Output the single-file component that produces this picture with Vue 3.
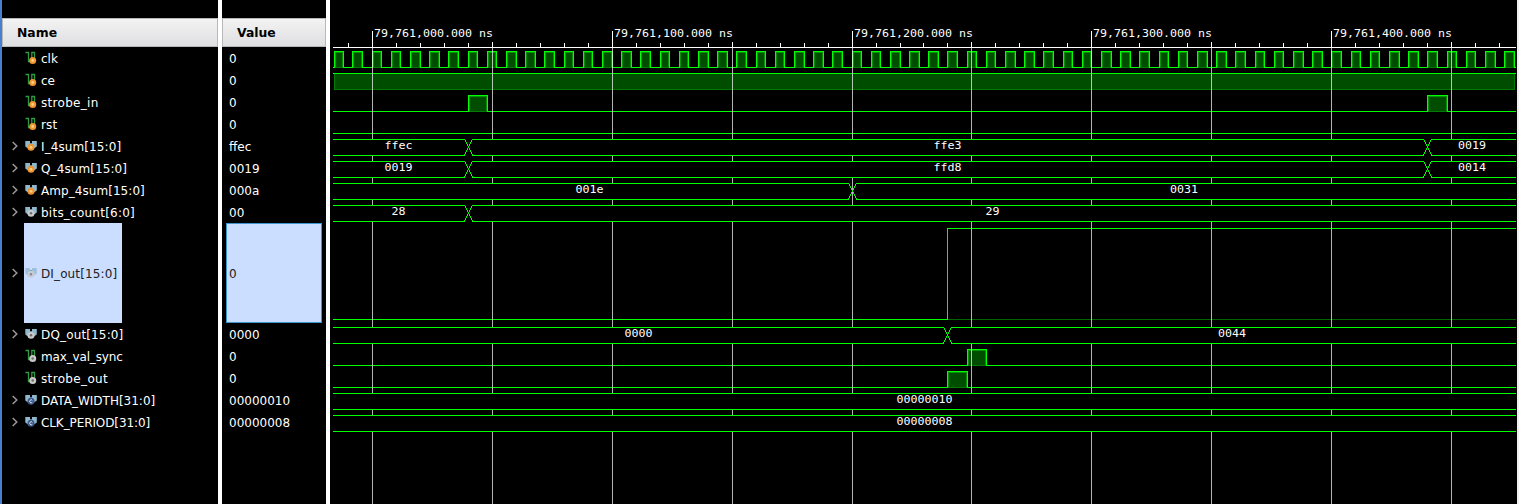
<script setup>
const X0 = 372.14
const PX = 19.195
const edge = (k) => Math.floor(X0 + PX * k)

const clock = []
for (let k = -2; k < 60; k++) clock.push([Math.max(334, edge(k)), edge(k + 0.5)])

const clockLine = 'M333 67.5' + clock.map(([a, b]) => `H${a + 0.5}V51.5H${b + 0.5}V67.5`).join('') + 'H1516'

const pulses = [
  ...clock.map(([a, b]) => ({ a, b, y: 51 })),
  { a: 468, b: 487, y: 95 },
  { a: 1427, b: 1447, y: 95 },
  { a: 967, b: 986, y: 349 },
  { a: 947, b: 967, y: 371 },
]

const bitLines = [
  clockLine,
  'M333 73.5H1516',
  'M333 111.5H468.5V95.5H487.5V111.5H1427.5V95.5H1447.5V111.5H1516',
  'M333 133.5H1516',
  'M333 319.5H947.5V228.5H1516',
  'M333 365.5H967.5V349.5H986.5V365.5H1516',
  'M333 387.5H947.5V371.5H967.5V387.5H1516',
]

const grid = Array.from({ length: 10 }, (_, k) => ({ x: edge(k * 6.25), major: k % 2 === 0 }))
const ticks = Array.from({ length: 50 }, (_, k) => edge((k - 1) * 1.25)).filter((x) => x < 1516)

const stamps = ['79,761,000.000 ns', '79,761,100.000 ns', '79,761,200.000 ns', '79,761,300.000 ns', '79,761,400.000 ns']
  .map((t, i) => ({ t, x: edge(i * 12.5) + 2 }))

const buses = [
  { y: 139, cross: [468, 1427], labels: [[385, 'ffec'], [934, 'ffe3'], [1458.5, '0019']] },
  { y: 161, cross: [468, 1427], labels: [[385, '0019'], [934, 'ffd8'], [1458.5, '0014']] },
  { y: 183, cross: [852], labels: [[576, '001e'], [1170.5, '0031']] },
  { y: 205, cross: [468], labels: [[392, '28'], [986, '29']] },
  { y: 327, cross: [947], labels: [[625, '0000'], [1218.5, '0044']] },
  { y: 393, cross: [], labels: [[897, '00000010']] },
  { y: 415, cross: [], labels: [[897, '00000008']] },
]

// Bus rails are interrupted where the value changes; the X is stepped one pixel per row.
function rails({ y, cross }) {
  let d = ''
  for (const r of [y, y + 16]) {
    let x = 333
    for (const c of cross) {
      d += `M${x} ${r}H${c - 4}v1H${x}z`
      x = c + 5
    }
    d += `M${x} ${r}H1516v1H${x}z`
  }
  for (const c of cross) {
    for (let i = 0; i <= 16; i++) {
      const s = Math.floor((i + 1) / 2)
      d += `M${c - 4 + s} ${y + i}h1v1h-1z`
      if (i !== 8) d += `M${c + 4 - s} ${y + i}h1v1h-1z`
    }
  }
  return d
}

const signals = [
  { name: 'clk', value: '0', dot: 'in', track: 0 },
  { name: 'ce', value: '0', dot: 'in', track: 0 },
  { name: 'strobe_in', value: '0', dot: 'in', track: 0.3 },
  { name: 'rst', value: '0', dot: 'in', track: 0.1 },
  { name: 'I_4sum[15:0]', value: 'ffec', dot: 'in', bus: true, track: 0.1 },
  { name: 'Q_4sum[15:0]', value: '0019', dot: 'in', bus: true, track: 0.1 },
  { name: 'Amp_4sum[15:0]', value: '000a', dot: 'in', bus: true, track: 0.06 },
  { name: 'bits_count[6:0]', value: '00', dot: 'out', bus: true, track: 0.24 },
  { name: 'DI_out[15:0]', value: '0', dot: 'out', bus: true, selected: true, track: 0.12 },
  { name: 'DQ_out[15:0]', value: '0000', dot: 'out', bus: true, track: 0.15 },
  { name: 'max_val_sync', value: '0', dot: 'out', track: -0.16 },
  { name: 'strobe_out', value: '0', dot: 'out', track: 0.35 },
  { name: 'DATA_WIDTH[31:0]', value: '00000010', dot: 'const', bus: true, track: 0 },
  { name: 'CLK_PERIOD[31:0]', value: '00000008', dot: 'const', bus: true, track: -0.1 },
]
</script>

<template>
  <div class="viewer">
    <section class="names">
      <header class="head">Name</header>
      <div v-for="s in signals" :key="s.name" class="row" :class="{ selected: s.selected }">
        <span class="twist">
          <svg v-if="s.bus" width="6" height="10" viewBox="0 0 6 10"><path d="M0.7 1L4.8 5L0.7 9" fill="none" stroke="#999" stroke-width="1.5" /></svg>
        </span>
        <span class="cell">
          <svg class="icon" width="13" height="14" viewBox="0 0 13 14">
            <template v-if="s.bus">
              <path d="M0.3 2H5V5L3 9.5L0.3 7.5ZM7 2H11.8V7.5L9 9.5L7 5Z" fill="#8fb8cd" />
              <path d="M5 4H7V6H5Z" fill="#5d8093" />
            </template>
            <path v-else d="M0.5 1.5H3.5V10.5H6M6.8 8V1.5H9.5V8" fill="none" stroke="#2f9a41" stroke-width="1.3" />
            <g :transform="s.bus ? 'translate(6 8.3)' : 'translate(7.7 9.5)'">
              <circle r="3.5" :class="s.dot" />
              <circle v-if="s.dot === 'in'" r="1.4" fill="#ffcf80" />
              <circle v-else-if="s.dot === 'out'" r="1.2" fill="#6c6c6c" />
              <path v-else d="M1.3 -1A1.5 1.5 0 1 0 1.3 1" fill="none" stroke="#e4ecf8" />
            </g>
          </svg>
          <span class="label" :style="{ letterSpacing: s.track + 'px' }">{{ s.name }}</span>
        </span>
      </div>
    </section>
    <section class="values">
      <header class="head">Value</header>
      <div v-for="s in signals" :key="s.name" class="row" :class="{ selected: s.selected }">
        <span class="cell"><span class="label">{{ s.value }}</span></span>
      </div>
    </section>
    <svg class="waves" width="1189" height="504" viewBox="330 0 1189 504">
      <g shape-rendering="crispEdges">
        <rect x="334.5" y="73.5" width="1180" height="16" class="fill" />
        <rect v-for="(p, i) in pulses" :key="i" :x="p.a + 1.5" :y="p.y + 1.5" :width="p.b - p.a - 2" height="15" class="fill pulse" />
        <path d="M947 319.5H1516" class="dim" />
        <path v-for="(d, i) in bitLines" :key="i" :d="d" class="wave" />
        <rect v-for="(p, i) in pulses" :key="'b' + i" :x="p.a + 1" :y="p.y + 16" :width="p.b - p.a - 1" height="1" class="foot" />
        <rect v-for="g in grid" :key="g.x" :x="g.x" y="48" width="1" height="456" class="grid" />
        <rect v-for="b in buses" :key="b.y" x="333" :y="b.y" width="1183" height="17" />
        <rect x="852" y="183" width="1" height="17" class="grid" />
        <path v-for="b in buses" :key="'p' + b.y" :d="rails(b)" class="rail" />
        <rect x="333" y="47" width="1183" height="1" class="axis" />
        <rect v-for="x in ticks" :key="x" :x="x" y="43" width="1" height="4" class="axis" />
        <rect v-for="g in grid" :key="'g' + g.x" :x="g.x" :y="g.major ? 31 : 42" width="1" :height="g.major ? 17 : 6" class="axis" />
        <rect x="1517" y="0" width="2" height="504" class="edge" />
      </g>
      <text v-for="s in stamps" :key="s.t" :x="s.x" y="37" textLength="119" lengthAdjust="spacingAndGlyphs" class="mono">{{ s.t }}</text>
      <template v-for="b in buses" :key="'t' + b.y">
        <text v-for="[x, t] in b.labels" :key="x" :x="x - 0.5" :y="b.y + 10" :textLength="t.length * 7" lengthAdjust="spacingAndGlyphs" class="mono">{{ t }}</text>
      </template>
    </svg>
  </div>
</template>

<style>
body {
  background: #000;
  overflow: hidden;
}
</style>

<style scoped>
.viewer {
  box-sizing: border-box;
  display: flex;
  width: 1519px;
  height: 504px;
  background: #000;
  border-left: 2px solid #4a7fd0;
  font: 12px/22px "DejaVu Sans", sans-serif;
  color: #fff;
}
.names,
.values {
  box-sizing: border-box;
  flex: none;
  padding-top: 18px;
  border-right: 4px solid #fff;
}
.names {
  width: 220px;
}
.values {
  width: 108px;
}
.head {
  box-sizing: border-box;
  height: 29px;
  border: 1px solid #b8b8b8;
  background: linear-gradient(#f3f3f3, #dfdfe2);
  color: #000;
  font-weight: bold;
  font-size: 12.4px;
  line-height: 27px;
  padding-left: 14px;
}
.row {
  display: flex;
  height: 22px;
}
.names .row {
  align-items: center;
}
.twist {
  display: flex;
  width: 12px;
  padding-left: 10px;
}
.cell {
  display: flex;
  align-items: center;
  white-space: nowrap;
}
.label {
  height: 22px;
  line-height: 24px;
}
.icon {
  margin: 0 3px 0 1px;
}
.row.selected {
  height: 100px;
}
.selected .cell {
  box-sizing: border-box;
  height: 100px;
  background: #cbdeff;
  color: #202020;
}
.selected .icon {
  opacity: 0.75;
}
.names .selected .cell {
  width: 98px;
}
.values .cell {
  padding-left: 7px;
}
.values .selected .cell {
  width: 96px;
  margin-left: 4px;
  padding-left: 2px;
  border: 1px solid #3d94d1;
}
.in {
  fill: #ef9430;
}
.out {
  fill: #c8c8c8;
}
.const {
  fill: #3c5688;
}
.waves {
  flex: none;
  display: block;
}
.fill {
  fill: #004d00;
  stroke: #007a00;
}
.pulse {
  stroke: #009600;
}
.foot {
  fill: #007a00;
}
.wave {
  fill: none;
  stroke: #00ff00;
}
.rail {
  fill: #00ff00;
}
.dim {
  stroke: #006400;
}
.grid {
  fill: #fff;
  fill-opacity: 0.7;
}
.axis {
  fill: #fff;
}
.edge {
  fill: #f0f0f0;
}
.mono {
  font: 11px "DejaVu Sans Mono", monospace;
  fill: #fff;
}
</style>
